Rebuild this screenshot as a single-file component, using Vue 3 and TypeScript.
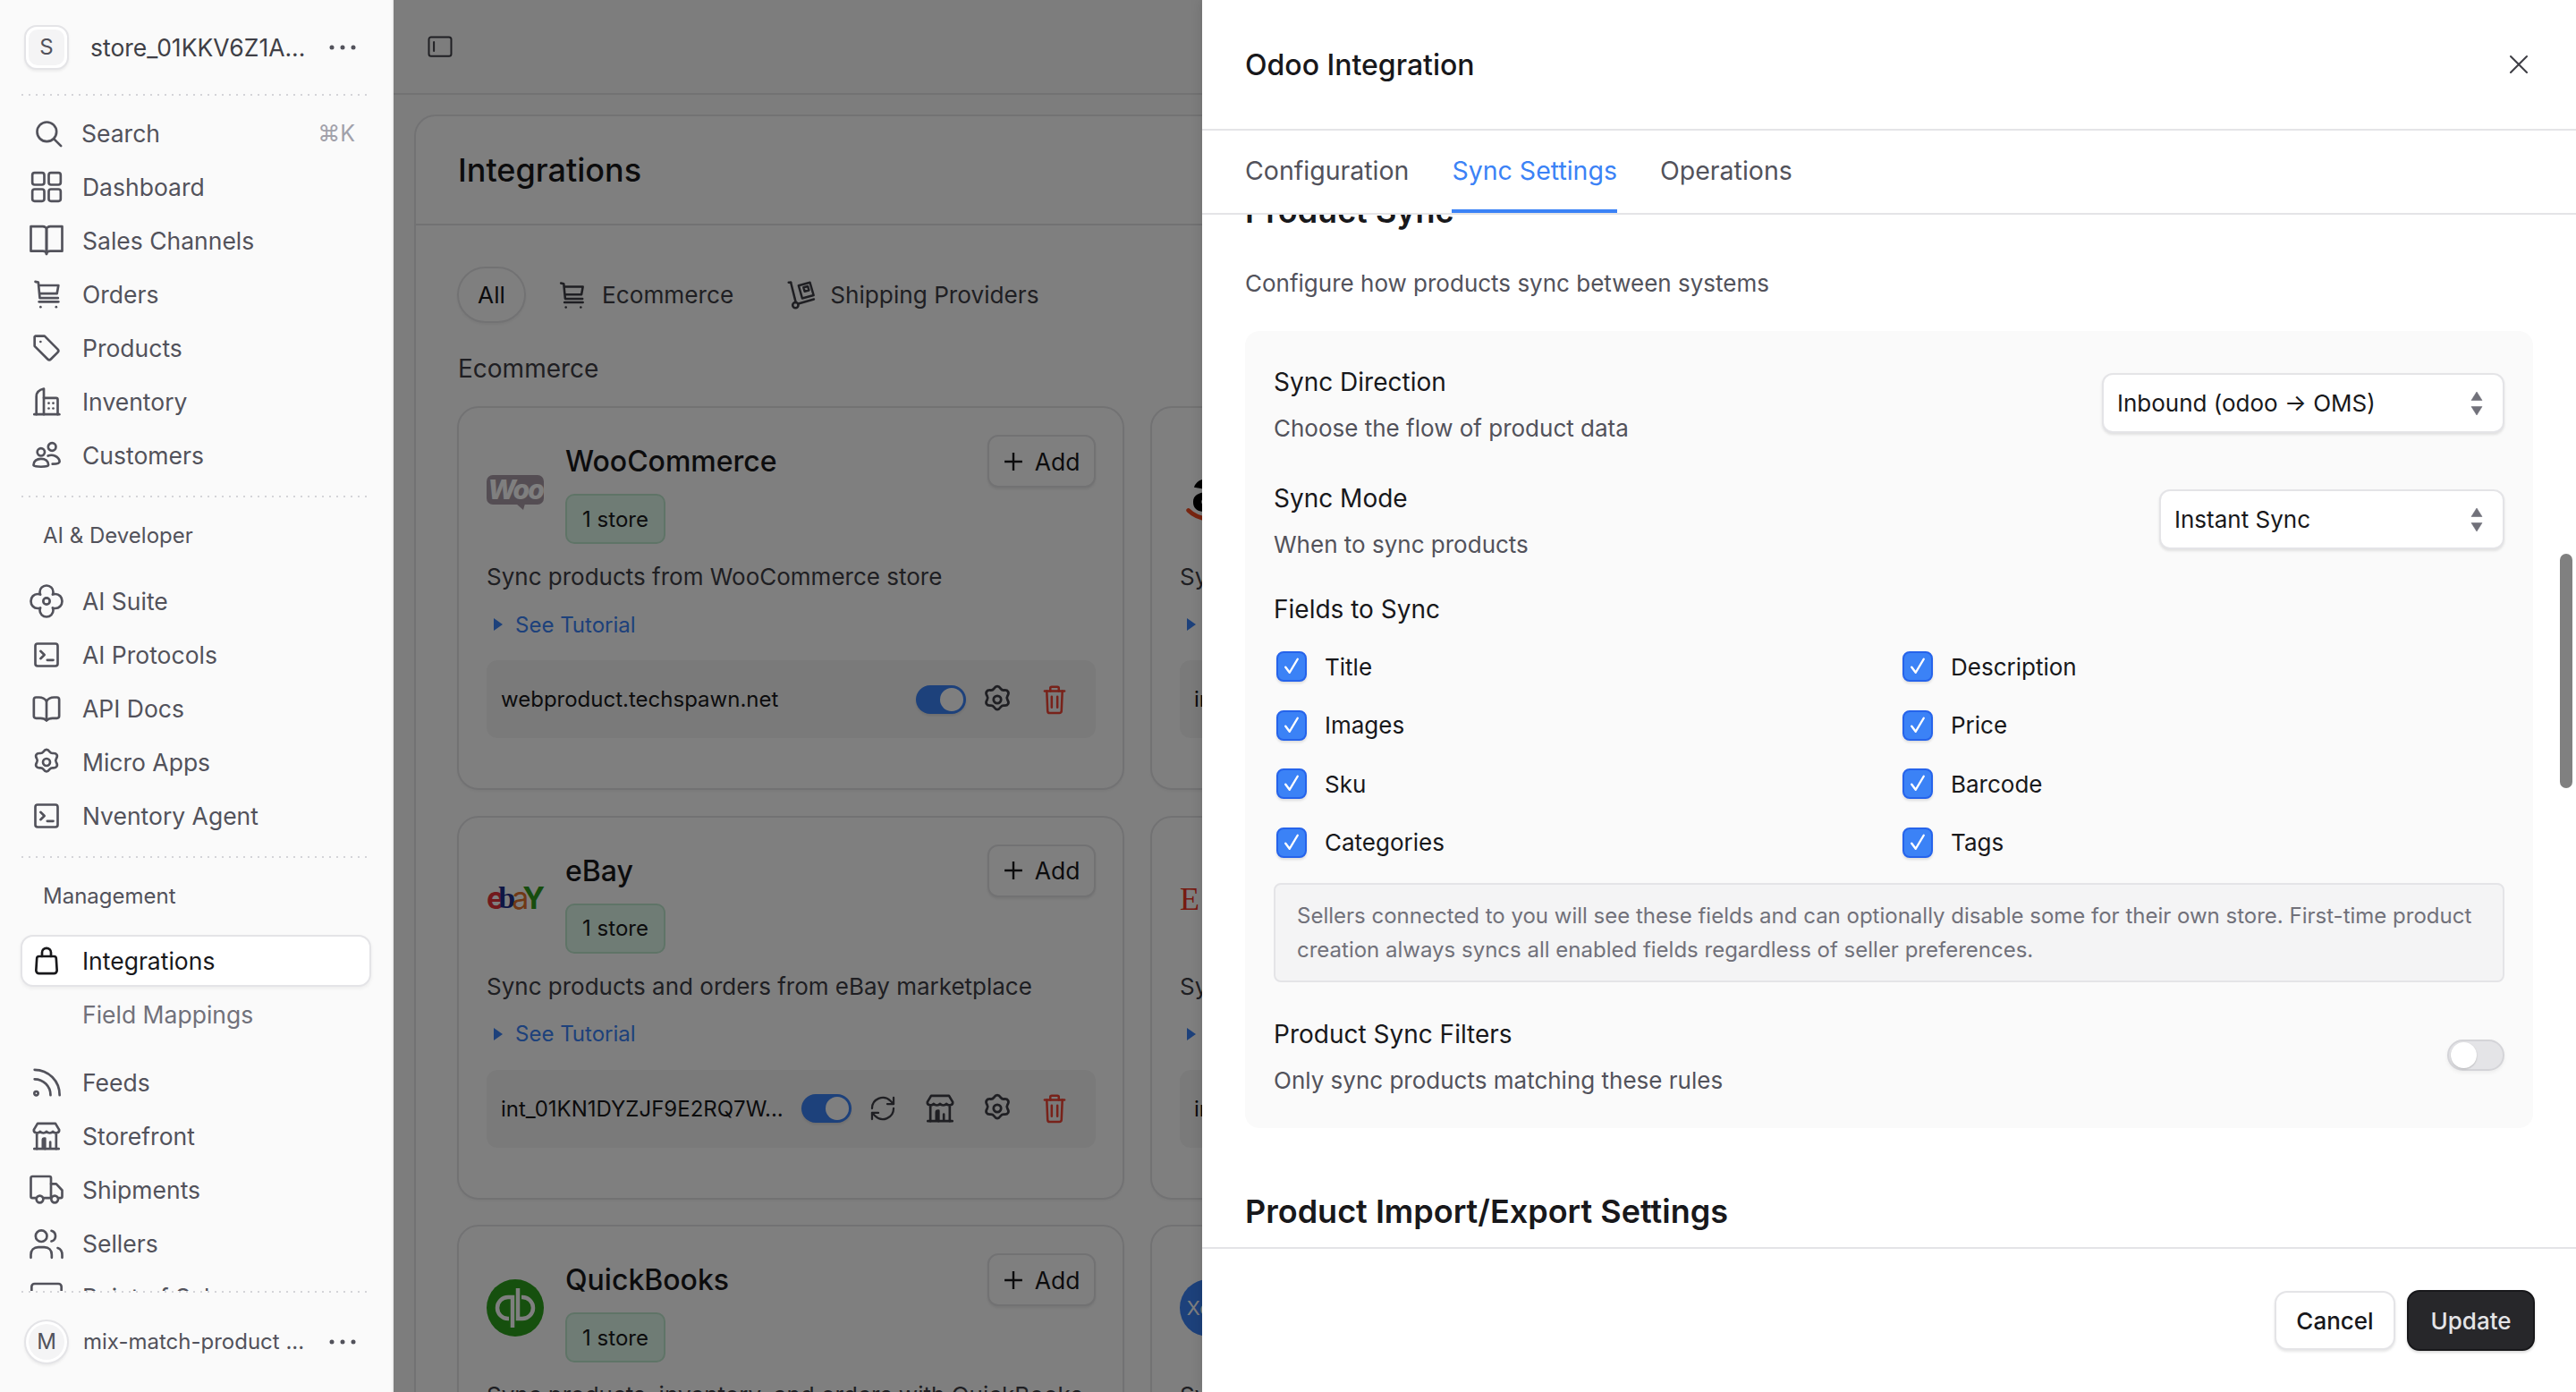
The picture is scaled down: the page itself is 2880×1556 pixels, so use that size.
<script setup lang="ts">
interface NavItem {
  label: string
  icon: string
}

interface Card {
  name: string
  logo: string
  desc: string
  store: string
  hasSync: boolean
}

const gear = [
  'M12 3.5c1 0 1.5.6 2.2 1.6.5.7 1.2 1 2.2.9 1.3-.1 2 .1 2.5 1 .5.9.3 1.6-.4 2.7-.5.8-.5 1.6 0 2.4.7 1.1.9 1.8.4 2.7-.5.9-1.2 1.1-2.5 1-1-.1-1.7.2-2.2.9-.7 1-1.2 1.6-2.2 1.6s-1.5-.6-2.2-1.6c-.5-.7-1.2-1-2.2-.9-1.3.1-2-.1-2.5-1-.5-.9-.3-1.6.4-2.7.5-.8.5-1.6 0-2.4-.7-1.1-.9-1.8-.4-2.7.5-.9 1.2-1.1 2.5-1 1 .1 1.7-.2 2.2-.9.7-1 1.2-1.6 2.2-1.6z',
  'M14.4 12a2.4 2.4 0 1 1-4.8 0 2.4 2.4 0 0 1 4.8 0z',
]
const terminal = [
  'M6 4.5h12a1.5 1.5 0 0 1 1.5 1.5v12a1.5 1.5 0 0 1-1.5 1.5H6A1.5 1.5 0 0 1 4.5 18V6A1.5 1.5 0 0 1 6 4.5z',
  'M8 9.5l2.6 2.5L8 14.5',
  'M12.5 15.5h4',
]
const cart = [
  'M4.5 3.5l2 .5 1 10.5h12.2',
  'M7 6h13l-1 5.5H7.8',
  'M7 17h13',
  'M8 20.5h.01',
  'M18.5 20.5h.01',
]
const store = [
  'M6 3.5h12l2.5 4.2c.3 2.2-3 2.8-4.2 1.2-1 1.3-3.3 1.3-4.3 0-1 1.3-3.3 1.3-4.3 0C6.5 10.5 3.2 9.9 3.5 7.7z',
  'M5.5 11v9.5',
  'M18.5 11v9.5',
  'M3.8 20.5h16.4',
  'M9.5 20v-5.5a1 1 0 0 1 1-1h.5v7',
  'M14.5 20v-4',
]

const icons: Record<string, string[]> = {
  search: ['M17.5 11a6.5 6.5 0 1 1-13 0 6.5 6.5 0 0 1 13 0z', 'M15.8 15.8l4.7 4.7'],
  dashboard: [
    'M4 2.5h5A1.5 1.5 0 0 1 10.5 4v5A1.5 1.5 0 0 1 9 10.5H4A1.5 1.5 0 0 1 2.5 9V4A1.5 1.5 0 0 1 4 2.5z',
    'M15 2.5h5A1.5 1.5 0 0 1 21.5 4v5a1.5 1.5 0 0 1-1.5 1.5h-5A1.5 1.5 0 0 1 13.5 9V4A1.5 1.5 0 0 1 15 2.5z',
    'M4 13.5h5a1.5 1.5 0 0 1 1.5 1.5v5A1.5 1.5 0 0 1 9 21.5H4A1.5 1.5 0 0 1 2.5 20v-5A1.5 1.5 0 0 1 4 13.5z',
    'M15 13.5h5a1.5 1.5 0 0 1 1.5 1.5v5a1.5 1.5 0 0 1-1.5 1.5h-5a1.5 1.5 0 0 1-1.5-1.5v-5a1.5 1.5 0 0 1 1.5-1.5z',
  ],
  book: [
    'M1.5 2.5h8c1.5 0 2.5 1 2.5 2.2V21c0-1-1-2-2.5-2h-8z',
    'M22.5 2.5h-8c-1.5 0-2.5 1-2.5 2.2V21c0-1 1-2 2.5-2h8z',
  ],
  cart,
  tag: [
    'M4.5 4h6.2l8.8 8.8a1.5 1.5 0 0 1 0 2.1l-4.6 4.6a1.5 1.5 0 0 1-2.1 0L4 10.7V4.5z',
    'M8 7.8h.01',
  ],
  building: [
    'M3.8 20.5h16.8',
    'M5.2 20.5V8.5c0-2.5 2-4.5 5-5.2v17.2',
    'M10.2 9.5h8.3a1 1 0 0 1 1 1v10',
    'M13.5 13h.01',
    'M16.5 13h.01',
    'M13.5 16.5h.01',
    'M16.5 16.5h.01',
  ],
  people: [
    'M18.3 6.3a2.6 2.6 0 1 1-5.2 0 2.6 2.6 0 0 1 5.2 0z',
    'M10.8 9.8a2.5 2.5 0 1 1-5 0 2.5 2.5 0 0 1 5 0z',
    'M3.3 18.5c0-2.7 2.2-4.2 5-4.2s5 1.5 5 4.2c0 1.5-10 1.5-10 0z',
    'M13 12.3c3-1.2 7.3.2 7.8 3.8 0 1.3-1.8 1.7-4.8 1.7',
  ],
  flower: [
    'M12 1.5c2.6 0 4.5 2 4.5 4.3 0 .7-.1 1.2-.4 1.8.6-.3 1.2-.4 1.9-.4 2.4 0 4.5 2 4.5 4.8s-2.1 4.8-4.5 4.8c-.7 0-1.3-.1-1.9-.4.3.6.4 1.1.4 1.8 0 2.3-1.9 4.3-4.5 4.3s-4.5-2-4.5-4.3c0-.7.1-1.2.4-1.8-.6.3-1.2.4-1.9.4-2.4 0-4.5-2-4.5-4.8S3.6 7.2 6 7.2c.7 0 1.3.1 1.9.4-.3-.6-.4-1.1-.4-1.8C7.5 3.5 9.4 1.5 12 1.5z',
    'M14.2 12a2.2 2.2 0 1 1-4.4 0 2.2 2.2 0 0 1 4.4 0z',
  ],
  terminal,
  bookSmall: [
    'M12 7c-1-1.5-3-2.5-5-2.5H5c-1 0-1.5.5-1.5 1.5v11c0 1 .5 1.5 1.5 1.5h3c2 0 3 .5 4 1.5 1-1 2-1.5 4-1.5h3c1 0 1.5-.5 1.5-1.5V6c0-1-.5-1.5-1.5-1.5h-2c-2 0-4 1-5 2.5z',
    'M12 7v13',
  ],
  gear,
  bag: [
    'M7 9h10a1.5 1.5 0 0 1 1.5 1.5l.5 8a2 2 0 0 1-2 2H7a2 2 0 0 1-2-2l.5-8A1.5 1.5 0 0 1 7 9z',
    'M9 9V6.5a3 3 0 0 1 6 0V9',
  ],
  rss: [
    'M4 3.5c9.3 0 16.8 7.5 16.8 17',
    'M4 9.8c6 0 10.7 4.8 10.7 10.7',
    'M3.8 19.3a1.3 1.3 0 1 0 2.6 0 1.3 1.3 0 0 0-2.6 0z',
  ],
  store,
  truck: [
    'M5 17.5H2.5a1 1 0 0 1-1-1V4a1 1 0 0 1 1-1H14a1 1 0 0 1 1 1v13.5H10',
    'M15 8h3.5l4 4.3v4.2a1 1 0 0 1-1 1H20',
    'M9.8 18.3a2.3 2.3 0 1 1-4.6 0 2.3 2.3 0 0 1 4.6 0z',
    'M19.8 18.3a2.3 2.3 0 1 1-4.6 0 2.3 2.3 0 0 1 4.6 0z',
  ],
  users: [
    'M12.3 7a3.8 3.8 0 1 1-7.6 0 3.8 3.8 0 0 1 7.6 0z',
    'M1.5 21.5v-2c0-3 2-5 5-5h4c3 0 5 2 5 5v2',
    'M15.3 3.5c1.7.5 2.7 2 2.7 3.5s-1 3-2.7 3.5',
    'M19.5 15c2 .6 3 2.4 3 4.7v1.8',
  ],
  pos: ['M2 21V5a2 2 0 0 1 2-2h16a2 2 0 0 1 2 2v16'],
  panel: [
    'M4 3.5h16a2 2 0 0 1 2 2v13a2 2 0 0 1-2 2H4a2 2 0 0 1-2-2v-13a2 2 0 0 1 2-2z',
    'M6.5 8v8',
  ],
  dolly: [
    'M4.5 3l3.5 14',
    'M3 3h1.5',
    'M9.8 19a2 2 0 1 1-4 0 2 2 0 0 1 4 0z',
    'M9.8 18l11-3.2',
    'M10 5.2l8-2.2 2.6 9-8 2.2z',
    'M13.5 6.5l3-.8.8 2.8-3 .8z',
  ],
  sync: [
    'M3.5 12a8.5 8.5 0 0 1 14.5-6l2.5 2.5',
    'M20.5 3.5v5h-5',
    'M20.5 12a8.5 8.5 0 0 1-14.5 6l-2.5-2.5',
    'M3.5 20.5v-5h5',
  ],
  trash: [
    'M5 6h14',
    'M9 6V4c0-.5.5-1 1-1h4c.5 0 1 .5 1 1v2',
    'M6.5 6l.6 14a1.5 1.5 0 0 0 1.5 1.5h6.8a1.5 1.5 0 0 0 1.5-1.5l.6-14',
    'M10 10v7.5',
    'M14 10v7.5',
  ],
}

const mainNav: NavItem[] = [
  { label: 'Dashboard', icon: 'dashboard' },
  { label: 'Sales Channels', icon: 'book' },
  { label: 'Orders', icon: 'cart' },
  { label: 'Products', icon: 'tag' },
  { label: 'Inventory', icon: 'building' },
  { label: 'Customers', icon: 'people' },
]

const aiNav: NavItem[] = [
  { label: 'AI Suite', icon: 'flower' },
  { label: 'AI Protocols', icon: 'terminal' },
  { label: 'API Docs', icon: 'bookSmall' },
  { label: 'Micro Apps', icon: 'gear' },
  { label: 'Nventory Agent', icon: 'terminal' },
]

const manageNav: NavItem[] = [
  { label: 'Feeds', icon: 'rss' },
  { label: 'Storefront', icon: 'store' },
  { label: 'Shipments', icon: 'truck' },
  { label: 'Sellers', icon: 'users' },
  { label: 'Point of Sale', icon: 'pos' },
]

const cards: Card[] = [
  { name: 'WooCommerce', logo: 'woo', desc: 'Sync products from WooCommerce store', store: 'webproduct.techspawn.net', hasSync: false },
  { name: 'Amazon', logo: 'amazon', desc: 'Sync products', store: 'int_01KN', hasSync: false },
  { name: 'eBay', logo: 'ebay', desc: 'Sync products and orders from eBay marketplace', store: 'int_01KN1DYZJF9E2RQ7W...', hasSync: true },
  { name: 'Etsy', logo: 'etsy', desc: 'Sync products', store: 'int_01KN', hasSync: false },
  { name: 'QuickBooks', logo: 'qb', desc: 'Sync products, inventory, and orders with QuickBooks', store: '', hasSync: false },
  { name: 'Xero', logo: 'xero', desc: 'Sync products', store: '', hasSync: false },
]

const fields = ['Title', 'Description', 'Images', 'Price', 'Sku', 'Barcode', 'Categories', 'Tags']
</script>

<template>
  <div class="app">
    <aside class="sidebar">
      <div class="side-head">
        <div class="avatar square"><span>S</span></div>
        <span class="store-name">store_01KKV6Z1A...</span>
        <svg class="dots" viewBox="0 0 30 6"><circle cx="3" cy="3" r="2.5" /><circle cx="15" cy="3" r="2.5" /><circle cx="27" cy="3" r="2.5" /></svg>
      </div>
      <div class="dotted"></div>

      <nav class="nav">
        <div class="nav-item search">
          <span class="nav-icon">
            <svg viewBox="0 0 24 24"><path v-for="d in icons.search" :key="d" :d="d" /></svg>
          </span>
          <span>Search</span>
          <span class="kbd">⌘K</span>
        </div>
        <div v-for="item in mainNav" :key="item.label" class="nav-item">
          <span class="nav-icon">
            <svg viewBox="0 0 24 24"><path v-for="d in icons[item.icon]" :key="d" :d="d" /></svg>
          </span>
          <span>{{ item.label }}</span>
        </div>

        <div class="dotted group-rule"></div>
        <div class="nav-label">AI &amp; Developer</div>
        <div v-for="item in aiNav" :key="item.label" class="nav-item">
          <span class="nav-icon">
            <svg viewBox="0 0 24 24"><path v-for="d in icons[item.icon]" :key="d" :d="d" /></svg>
          </span>
          <span>{{ item.label }}</span>
        </div>

        <div class="dotted group-rule"></div>
        <div class="nav-label">Management</div>
        <div class="nav-item active">
          <span class="nav-icon">
            <svg viewBox="0 0 24 24"><path v-for="d in icons.bag" :key="d" :d="d" /></svg>
          </span>
          <span>Integrations</span>
        </div>
        <div class="nav-item sub">Field Mappings</div>
        <div class="manage-gap"></div>
        <div v-for="item in manageNav" :key="item.label" class="nav-item">
          <span class="nav-icon">
            <svg viewBox="0 0 24 24"><path v-for="d in icons[item.icon]" :key="d" :d="d" /></svg>
          </span>
          <span>{{ item.label }}</span>
        </div>
      </nav>

      <div class="dotted"></div>
      <div class="side-foot">
        <div class="avatar round"><span>M</span></div>
        <span class="foot-name">mix-match-product ...</span>
        <svg class="dots" viewBox="0 0 30 6"><circle cx="3" cy="3" r="2.5" /><circle cx="15" cy="3" r="2.5" /><circle cx="27" cy="3" r="2.5" /></svg>
      </div>
    </aside>

    <main class="main">
      <div class="topbar">
        <svg class="panel-icon" viewBox="0 0 24 24"><path v-for="d in icons.panel" :key="d" :d="d" /></svg>
      </div>

      <section class="panel">
        <header class="panel-head">
          <h1>Integrations</h1>
        </header>
        <div class="panel-body">
          <div class="pills">
            <span class="pill on">All</span>
            <span class="pill">
              <svg viewBox="0 0 24 24"><path v-for="d in icons.cart" :key="d" :d="d" /></svg>
              Ecommerce
            </span>
            <span class="pill">
              <svg viewBox="0 0 24 24"><path v-for="d in icons.dolly" :key="d" :d="d" /></svg>
              Shipping Providers
            </span>
          </div>
          <h2 class="group-title">Ecommerce</h2>

          <div class="card-grid">
            <article v-for="card in cards" :key="card.name" class="card">
              <div class="card-head">
                <div class="logo">
                  <span v-if="card.logo === 'woo'" class="logo-woo">Woo</span>
                  <span v-else-if="card.logo === 'amazon'" class="logo-amazon">
                    a
                    <svg viewBox="0 0 64 20"><path d="M6 2c12 12 34 14 52 6" /></svg>
                  </span>
                  <span v-else-if="card.logo === 'ebay'" class="logo-ebay"><i class="e">e</i><i class="b">b</i><i class="a">a</i><i class="y">Y</i></span>
                  <span v-else-if="card.logo === 'etsy'" class="logo-etsy">E</span>
                  <svg v-else-if="card.logo === 'qb'" class="logo-qb" viewBox="0 0 64 64">
                    <circle cx="32" cy="32" r="32" fill="#2ca01c" />
                    <path d="M29 54V20h-5a12 12 0 0 0 0 24h1" fill="none" stroke="#fff" stroke-width="4.5" />
                    <path d="M35 10v34h5a12 12 0 0 0 0-24h-1" fill="none" stroke="#fff" stroke-width="4.5" />
                  </svg>
                  <span v-else class="logo-xero">Xero</span>
                </div>
                <div class="card-title">
                  <h3>{{ card.name }}</h3>
                  <span class="badge">1 store</span>
                </div>
                <button class="add-btn">
                  <svg viewBox="0 0 20 20"><path d="M10 1v18M1 10h18" /></svg>
                  Add
                </button>
              </div>
              <p class="card-desc">{{ card.desc }}</p>
              <div class="tutorial"><i class="caret"></i>See Tutorial</div>
              <div v-if="card.store" class="store-row">
                <span class="store-id">{{ card.store }}</span>
                <span class="switch on"><i></i></span>
                <span v-if="card.hasSync" class="icon-btn">
                  <svg class="sync" viewBox="0 0 24 24"><path v-for="d in icons.sync" :key="d" :d="d" /></svg>
                </span>
                <span v-if="card.hasSync" class="icon-btn">
                  <svg class="shop" viewBox="0 0 24 24"><path v-for="d in icons.store" :key="d" :d="d" /></svg>
                </span>
                <span class="icon-btn">
                  <svg viewBox="0 0 24 24"><path v-for="d in icons.gear" :key="d" :d="d" /></svg>
                </span>
                <span class="icon-btn red">
                  <svg viewBox="0 0 24 24"><path v-for="d in icons.trash" :key="d" :d="d" /></svg>
                </span>
              </div>
            </article>
          </div>
        </div>
      </section>

      <div class="overlay"></div>
    </main>

    <div class="modal">
      <header class="modal-head">
        <h2>Odoo Integration</h2>
        <svg class="close" viewBox="0 0 20 20"><path d="M4 4l12 12M16 4L4 16" /></svg>
      </header>

      <div class="tabs">
        <span class="tab">Configuration</span>
        <span class="tab current">Sync Settings</span>
        <span class="tab">Operations</span>
      </div>

      <div class="modal-body">
        <div class="scroll-inner">
          <h3 class="section-title">Product Sync</h3>
          <p class="section-sub">Configure how products sync between systems</p>

          <div class="box">
            <div class="row">
              <div>
                <div class="row-label">Sync Direction</div>
                <div class="row-sub">Choose the flow of product data</div>
              </div>
              <div class="select wide">
                <span>Inbound (odoo → OMS)</span>
                <svg viewBox="0 0 14 28"><path d="M7 1l6 9.5H1zM7 27l-6-9.5h12z" /></svg>
              </div>
            </div>

            <div class="row next">
              <div>
                <div class="row-label">Sync Mode</div>
                <div class="row-sub">When to sync products</div>
              </div>
              <div class="select narrow">
                <span>Instant Sync</span>
                <svg viewBox="0 0 14 28"><path d="M7 1l6 9.5H1zM7 27l-6-9.5h12z" /></svg>
              </div>
            </div>

            <div class="row-label fields-label">Fields to Sync</div>
            <div class="field-grid">
              <label v-for="field in fields" :key="field" class="field">
                <span class="check">
                  <svg viewBox="0 0 20 20"><path d="M5.5 10.5l3 4L14.5 4.5" /></svg>
                </span>
                {{ field }}
              </label>
            </div>

            <div class="info">
              Sellers connected to you will see these fields and can optionally disable some for their own store. First-time product creation always syncs all enabled fields regardless of seller preferences.
            </div>

            <div class="row filters">
              <div>
                <div class="row-label">Product Sync Filters</div>
                <div class="row-sub">Only sync products matching these rules</div>
              </div>
              <span class="switch off"><i></i></span>
            </div>
          </div>

          <h3 class="section-title second">Product Import/Export Settings</h3>
        </div>
        <div class="scroll-thumb"></div>
      </div>

      <footer class="modal-foot">
        <button class="btn ghost">Cancel</button>
        <button class="btn dark">Update</button>
      </footer>
    </div>
  </div>
</template>

<style>
html,
body {
  margin: 0;
  background: #fff;
  overflow: hidden;
}
</style>

<style scoped>
.app {
  position: relative;
  display: flex;
  width: 2880px;
  height: 1556px;
  overflow: hidden;
  font-family: Inter, 'Noto Sans', sans-serif;
  font-size: 26px;
  color: #18181b;
}

/* sidebar */
.sidebar {
  flex: none;
  width: 440px;
  height: 100%;
  box-sizing: border-box;
  border-right: 2px solid #efefef;
  background: #fafafa;
  display: flex;
  flex-direction: column;
  font-size: 26.5px;
}

.side-head {
  display: flex;
  align-items: center;
  height: 105px;
  flex: none;
  padding-left: 27px;
}

.avatar {
  width: 50px;
  height: 50px;
  flex: none;
  box-sizing: border-box;
  border: 2px solid #e4e4e7;
  background: #fff;
  box-shadow: 0 2px 3px rgba(0, 0, 0, 0.06);
  padding: 3px;
}

.avatar span {
  display: flex;
  align-items: center;
  justify-content: center;
  height: 100%;
  background: #f4f4f5;
  font-size: 24px;
  color: #52525b;
}

.avatar.square {
  border-radius: 14px;
}

.avatar.square span {
  border-radius: 10px;
}

.avatar.round,
.avatar.round span {
  border-radius: 50%;
}

.store-name {
  margin-left: 24px;
  color: #3f3f46;
  width: 253px;
  white-space: nowrap;
}

.dots {
  width: 30px;
  height: 6px;
  margin-left: 14px;
  fill: #52525b;
}

.dotted {
  flex: none;
  height: 2px;
  margin: 0 28px 0 24px;
  background: repeating-linear-gradient(90deg, #d4d4d8 0 2px, transparent 2px 8px);
}

.nav {
  flex: 1;
  min-height: 0;
  overflow: hidden;
  padding-top: 12px;
}

.nav-item {
  display: flex;
  align-items: center;
  height: 60px;
  color: #52525b;
  white-space: nowrap;
}

.nav-icon {
  width: 40px;
  height: 40px;
  margin: 0 20px 0 32px;
  flex: none;
}

.nav-icon svg,
.pill svg,
.icon-btn svg,
.panel-icon {
  display: block;
  width: 100%;
  height: 100%;
  fill: none;
  stroke: currentColor;
  stroke-width: 1.6;
  stroke-linecap: round;
  stroke-linejoin: round;
}

.nav-item.search .nav-icon {
  margin: 0 17px 0 34px;
}

.kbd {
  margin-left: auto;
  margin-right: 41px;
  color: #a1a1aa;
  font-size: 25px;
}

.group-rule {
  margin-top: 15px;
  margin-bottom: 23px;
}

.nav-label {
  height: 40px;
  line-height: 40px;
  margin-left: 48px;
  margin-bottom: 23px;
  font-size: 24px;
  color: #52525b;
}

.nav-item.active {
  box-sizing: border-box;
  height: 58px;
  margin: 0 23px;
  border: 2px solid #e4e4e7;
  border-radius: 14px;
  background: #fff;
  box-shadow: 0 2px 4px rgba(0, 0, 0, 0.06);
  color: #18181b;
}

.nav-item.active .nav-icon {
  margin-left: 7px;
}

.nav-item.sub {
  padding-left: 92px;
  margin-top: 1px;
  color: #71717a;
}

.manage-gap {
  height: 16px;
}

.side-foot {
  display: flex;
  align-items: center;
  flex: none;
  height: 111px;
  padding-left: 27px;
  padding-bottom: 2px;
  box-sizing: border-box;
}

.foot-name {
  margin-left: 16px;
  width: 261px;
  white-space: nowrap;
  font-size: 24px;
  color: #52525b;
}

/* page behind the sheet */
.main {
  position: relative;
  flex: 1;
  min-width: 0;
  height: 100%;
  background: #fafafa;
  overflow: hidden;
}

.overlay {
  position: absolute;
  inset: 0;
  background: rgba(0, 0, 0, 0.5);
}

.topbar {
  box-sizing: border-box;
  height: 106px;
  border-bottom: 2px solid #e4e4e7;
  padding: 37px 0 0 37px;
}

.panel-icon {
  width: 30px;
  height: 30px;
  color: #3f3f46;
}

.panel {
  margin: 22px 0 0 23px;
  width: 1600px;
  border: 2px solid #e4e4e7;
  border-radius: 24px;
  background: #fff;
}

.panel-head {
  height: 120px;
  border-bottom: 2px solid #e4e4e7;
  display: flex;
  align-items: center;
  padding-left: 47px;
}

.panel-head h1 {
  margin: 0;
  font-size: 36px;
  font-weight: 500;
}

.panel-body {
  padding: 46px 0 0 46px;
}

.pills {
  display: flex;
  align-items: center;
  height: 63px;
  font-size: 26.2px;
  color: #3f3f46;
}

.pill {
  display: flex;
  align-items: center;
  margin-right: 57px;
  gap: 15px;
  white-space: nowrap;
}

.pill:last-child {
  gap: 13px;
}

.pill svg {
  width: 38px;
  height: 38px;
}

.pill.on {
  box-sizing: border-box;
  width: 77px;
  height: 63px;
  margin-right: 32px;
  justify-content: center;
  border: 2px solid #e4e4e7;
  border-radius: 32px;
  color: #18181b;
  box-shadow: 0 2px 3px rgba(0, 0, 0, 0.05);
}

.group-title {
  margin: 31px 0 22px;
  height: 40px;
  line-height: 40px;
  padding-left: 1px;
  font-size: 28px;
  font-weight: 400;
  color: #3f3f46;
}

.card-grid {
  display: grid;
  grid-template-columns: 746px 746px;
  grid-auto-rows: 429px;
  column-gap: 29px;
  row-gap: 28.5px;
}

.card {
  box-sizing: border-box;
  border: 2px solid #e4e4e7;
  border-radius: 24px;
  background: #fff;
  padding: 30px 30px 0 31px;
  box-shadow: 0 2px 3px rgba(0, 0, 0, 0.04);
}

.card-head {
  display: flex;
  align-items: flex-start;
}

.logo {
  flex: none;
  width: 64px;
  height: 64px;
  align-self: center;
  margin-right: 24px;
  display: flex;
  align-items: center;
  position: relative;
}

.logo-woo {
  display: block;
  width: 64px;
  height: 33px;
  border-radius: 7px;
  background: #a99aa6;
  color: #fff;
  font-size: 30px;
  line-height: 33px;
  font-weight: 800;
  font-style: italic;
  text-align: center;
  letter-spacing: -2px;
  position: relative;
}

.logo-woo::after {
  content: '';
  position: absolute;
  left: 33px;
  top: 32px;
  border-left: 8px solid transparent;
  border-right: 2px solid transparent;
  border-top: 7px solid #a99aa6;
}

.logo-amazon {
  position: relative;
  width: 64px;
  text-align: center;
  color: #000;
  font-size: 66px;
  font-weight: 700;
  line-height: 50px;
}

.logo-amazon svg {
  position: absolute;
  left: 4px;
  top: 46px;
  width: 60px;
  height: 20px;
  fill: none;
  stroke: #f04a20;
  stroke-width: 5;
  stroke-linecap: round;
}

.logo-ebay {
  display: flex;
  font-size: 34px;
  font-weight: 700;
  line-height: 36px;
  margin-top: -2px;
  letter-spacing: -7px;
}

.logo-ebay i {
  font-style: normal;
}

.logo-ebay .e {
  color: #e53238;
}

.logo-ebay .b {
  color: #1c2f8a;
  font-family: 'Liberation Serif', serif;
  letter-spacing: -4px;
}

.logo-ebay .a {
  color: #e0702a;
  font-weight: 400;
}

.logo-ebay .y {
  color: #2f9a1d;
}

.logo-etsy {
  color: #ee3322;
  font-family: 'Liberation Serif', serif;
  font-size: 36px;
}

.logo-qb {
  width: 64px;
  height: 64px;
}

.logo-xero {
  display: block;
  box-sizing: border-box;
  width: 64px;
  height: 64px;
  border-radius: 50%;
  background: #3b82f6;
  color: #fff;
  line-height: 64px;
  text-align: center;
  font-size: 22px;
}

.card-title h3 {
  margin: 0;
  font-size: 32px;
  line-height: 60px;
  font-weight: 500;
  color: #18181b;
}

.badge {
  display: inline-flex;
  align-items: center;
  justify-content: center;
  box-sizing: border-box;
  width: 112px;
  height: 56px;
  margin-top: 6px;
  border: 2px solid #bfe8cf;
  border-radius: 10px;
  background: #dff8ea;
  font-size: 24px;
  color: #18181b;
}

.add-btn {
  display: flex;
  align-items: center;
  justify-content: center;
  gap: 13px;
  box-sizing: border-box;
  width: 121px;
  height: 59px;
  margin-left: auto;
  border: 2px solid #e4e4e7;
  border-radius: 12px;
  background: #fff;
  font: inherit;
  font-size: 26.5px;
  color: #18181b;
  box-shadow: 0 2px 3px rgba(0, 0, 0, 0.08);
}

.add-btn svg {
  width: 22px;
  height: 22px;
  fill: none;
  stroke: currentColor;
  stroke-width: 2.2;
}

.card-desc {
  margin: 17px 0 0;
  line-height: 40px;
  color: #3f3f46;
  white-space: nowrap;
}

.tutorial {
  display: flex;
  align-items: center;
  height: 36px;
  margin-top: 15px;
  padding-left: 8px;
  font-size: 24px;
  color: #3b82f6;
}

.caret {
  width: 0;
  height: 0;
  margin-right: 14px;
  border-left: 10px solid #3b82f6;
  border-top: 7px solid transparent;
  border-bottom: 7px solid transparent;
}

.store-row {
  display: flex;
  align-items: center;
  box-sizing: border-box;
  height: 87px;
  margin-top: 22px;
  padding: 0 14px 0 16px;
  border-radius: 12px;
  background: #f5f5f5;
}

.store-id {
  flex: 1;
  min-width: 0;
  font-size: 24px;
  color: #18181b;
  white-space: nowrap;
  overflow: hidden;
}

.switch {
  display: block;
  box-sizing: border-box;
  flex: none;
  position: relative;
  border-radius: 20px;
}

.switch i {
  position: absolute;
  display: block;
  border-radius: 50%;
  background: #fff;
}

.switch.on {
  width: 56px;
  height: 32px;
  margin-right: 3px;
  background: #3b82f6;
  box-shadow: 0 2px 3px rgba(0, 0, 0, 0.1);
}

.switch.on i {
  right: 3px;
  top: 3px;
  width: 26px;
  height: 26px;
}

.switch.off {
  width: 64px;
  height: 35px;
  margin-top: 26px;
  border: 2px solid #d4d4d8;
  background: #e4e4e7;
  box-shadow: 0 2px 4px rgba(0, 0, 0, 0.06);
}

.switch.off i {
  left: 2px;
  top: 1px;
  width: 29px;
  height: 29px;
  box-shadow: 0 1px 2px rgba(0, 0, 0, 0.2);
}

.icon-btn {
  flex: none;
  width: 64px;
  height: 42px;
  display: flex;
  align-items: center;
  justify-content: center;
  color: #3f3f46;
}

.icon-btn svg {
  width: 42px;
  height: 42px;
}

.icon-btn svg.sync {
  width: 34px;
  height: 34px;
}

.icon-btn svg.shop {
  width: 40px;
  height: 40px;
}

.icon-btn.red {
  color: #f04434;
}

.icon-btn.red svg {
  width: 38px;
  height: 38px;
}

/* sheet */
.modal {
  position: absolute;
  top: 0;
  right: 0;
  width: 1536px;
  height: 100%;
  display: flex;
  flex-direction: column;
  background: #fff;
  box-shadow: -2px 0 12px rgba(0, 0, 0, 0.1);
}

.modal-head {
  flex: none;
  display: flex;
  align-items: center;
  justify-content: space-between;
  height: 144px;
  border-bottom: 2px solid #e4e4e7;
  padding: 0 49px 0 48px;
}

.modal-head h2 {
  margin: 0;
  font-size: 32px;
  font-weight: 500;
}

.close {
  width: 30px;
  height: 30px;
  fill: none;
  stroke: #3f3f46;
  stroke-width: 1.4;
  stroke-linecap: round;
}

.tabs {
  flex: none;
  display: flex;
  gap: 48px;
  box-sizing: border-box;
  height: 94px;
  padding: 0 48px;
  border-bottom: 2px solid #e4e4e7;
  background: #fff;
  position: relative;
  z-index: 1;
  font-size: 28.5px;
}

.tab {
  display: flex;
  align-items: center;
  box-sizing: border-box;
  height: 92px;
  padding-bottom: 3px;
  color: #52525b;
}

.tab.current {
  color: #3b82f6;
  box-shadow: inset 0 -4px 0 #3b82f6;
}

.modal-body {
  flex: 1;
  min-height: 0;
  position: relative;
  overflow: hidden;
}

.scroll-inner {
  margin-top: -28px;
  padding: 0 48px;
}

.section-title {
  margin: 0;
  font-size: 36px;
  line-height: 48px;
  font-weight: 600;
}

.section-title.second {
  margin-top: 69px;
}

.section-sub {
  margin: 37px 0 33px;
  line-height: 40px;
  color: #52525b;
}

.box {
  box-sizing: border-box;
  border-radius: 16px;
  background: #fafafa;
  padding: 37px 32px 33px;
}

.row {
  display: flex;
  align-items: flex-start;
  justify-content: space-between;
}

.row.next,
.row.filters {
  margin-top: 38px;
}

.row-label {
  height: 40px;
  line-height: 40px;
  font-size: 28px;
  color: #18181b;
}

.row-sub {
  height: 40px;
  line-height: 40px;
  margin-top: 12px;
  color: #52525b;
}

.select {
  display: flex;
  align-items: center;
  justify-content: space-between;
  box-sizing: border-box;
  height: 67px;
  margin-top: 10px;
  padding: 0 22px 0 15px;
  border: 2px solid #e4e4e7;
  border-radius: 12px;
  background: #fff;
  box-shadow: 0 2px 3px rgba(0, 0, 0, 0.1);
}

.select.wide {
  width: 450px;
}

.select.narrow {
  width: 386px;
}

.select svg {
  width: 14px;
  height: 28px;
  fill: #71717a;
  stroke: #71717a;
  stroke-width: 0.6;
  stroke-linejoin: round;
}

.fields-label {
  margin-top: 32px;
}

.field-grid {
  display: grid;
  grid-template-columns: 1fr 1fr;
  column-gap: 24px;
  row-gap: 31.6px;
  margin-top: 27px;
}

.field {
  display: flex;
  align-items: center;
  height: 34px;
  gap: 20px;
  padding-left: 3px;
}

.check {
  display: block;
  box-sizing: border-box;
  width: 34px;
  height: 34px;
  border: 2px solid #2563eb;
  border-radius: 8px;
  background: #3b82f6;
  box-shadow: 0 2px 3px rgba(0, 0, 0, 0.12);
}

.check svg {
  display: block;
  width: 30px;
  height: 30px;
  fill: none;
  stroke: #fff;
  stroke-width: 1.6;
  stroke-linecap: round;
  stroke-linejoin: round;
}

.info {
  box-sizing: border-box;
  height: 111px;
  margin-top: 28px;
  padding: 16px 24px;
  border: 2px solid #e4e4e7;
  border-radius: 8px;
  background: #f4f4f5;
  font-size: 24px;
  line-height: 38px;
  color: #71717a;
}

.scroll-thumb {
  position: absolute;
  top: 379px;
  right: 4px;
  width: 14px;
  height: 262px;
  border-radius: 7px;
  background: #808080;
}

.modal-foot {
  flex: none;
  display: flex;
  align-items: center;
  justify-content: flex-end;
  gap: 13px;
  box-sizing: border-box;
  height: 162px;
  padding: 0 46px 0 0;
  border-top: 2px solid #e4e4e7;
}

.btn {
  box-sizing: border-box;
  font: inherit;
  font-weight: 500;
  border-radius: 14px;
}

.btn.ghost {
  width: 135px;
  height: 66px;
  border: 2px solid #e4e4e7;
  background: #fff;
  color: #18181b;
  box-shadow: 0 2px 3px rgba(0, 0, 0, 0.1);
}

.btn.dark {
  width: 143px;
  height: 68px;
  border: 2px solid #18181b;
  background: #27272a;
  color: #e4e4e7;
  box-shadow: 0 2px 3px rgba(0, 0, 0, 0.15);
}
</style>
